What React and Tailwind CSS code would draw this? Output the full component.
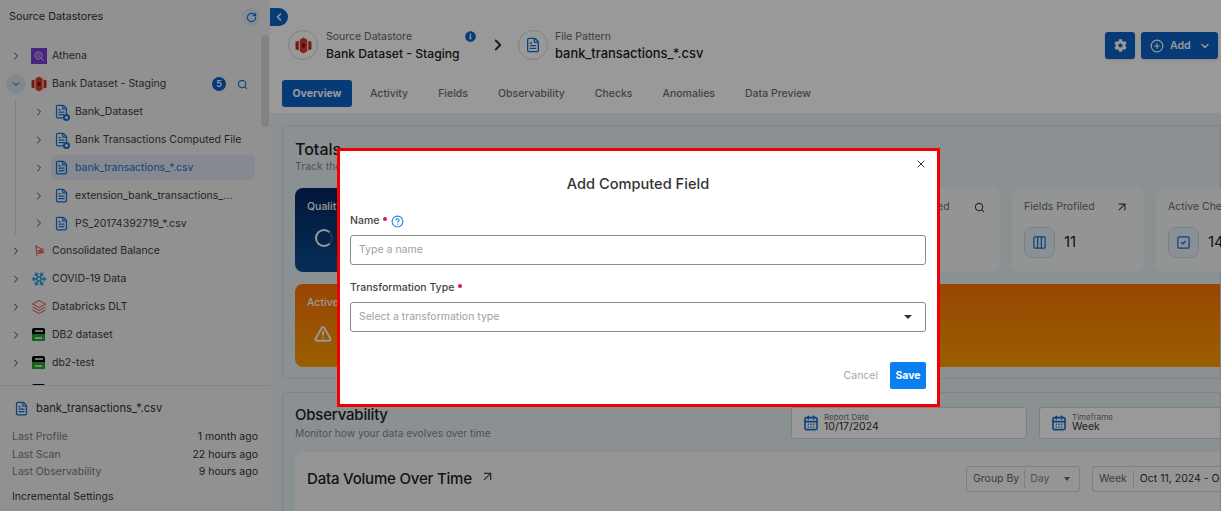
import React from 'react';
import { ChevronRight, ChevronDown, ChevronLeft, RotateCw, Search, FileText, X, CirclePlus, ArrowUpRight, CircleHelp, Columns3, SquareCheck, TriangleAlert, Snowflake, CalendarDays } from 'lucide-react';
import { FaCog, FaInfoCircle } from 'react-icons/fa';

const font = { fontFamily: 'Inter, "Liberation Sans", sans-serif' };

const RedCube = ({ size = 16 }) => (
  <svg width={size} height={size} viewBox="0 0 16 16">
    <path d="M0.5 4.5l3-1v9l-3-1z" fill="#c42a1e" />
    <path d="M15.5 4.5l-3-1v9l3-1z" fill="#c42a1e" />
    <path d="M4.5 2.5L8 0.5l3.5 2v11L8 15.500l-3.500-2z" fill="#de3a2e" />
    <rect x="6.500" y="6" width="3" height="4" fill="#7a1710" />
  </svg>
);

const Athena = () => (
  <svg width="16" height="16" viewBox="0 0 16 16">
    <rect width="16" height="16" fill="#7c3fd6" />
    <circle cx="7.500" cy="7.500" r="3.600" fill="none" stroke="#d9c8f5" strokeWidth="1" />
    <circle cx="7.500" cy="7.500" r="1.500" fill="none" stroke="#d9c8f5" strokeWidth="0.7" />
    <path d="M10 10l3.500 3.500" stroke="#d9c8f5" strokeWidth="1" />
  </svg>
);

const Consolidated = () => (
  <svg width="16" height="16" viewBox="0 0 16 16">
    <path d="M5 2l1 11M5.500 3.500l6.500 3-5 1.500 6 1-6 1.500" fill="none" stroke="#e0685e" strokeWidth="1.300" />
  </svg>
);

const Databricks = () => (
  <svg width="16" height="16" viewBox="0 0 16 16" fill="none" stroke="#e0523f" strokeWidth="1">
    <path d="M8 1.500l6.500 3.500L8 8.500 1.500 5z" />
    <path d="M1.500 8L8 11.500 14.500 8" />
    <path d="M1.500 11L8 14.500 14.500 11" />
  </svg>
);

const Db2 = () => (
  <div className="ml-[1px] flex h-[13px] w-[13px] flex-col overflow-hidden rounded-[2px] bg-black">
    <div className="mx-auto mt-[2px] h-[2px] w-[8px] bg-[#bfbfbf]" />
    <div className="mt-auto flex h-[7px] items-center justify-center bg-[#1fa82e]">
      <div className="h-[2px] w-[7px] bg-[#bfe8c2]" />
    </div>
  </div>
);

const GearFile = () => (
  <div className="relative h-[16px] w-[14px]">
    <FileText size={15} strokeWidth={2} className="text-[#1371d6]" />
    <div className="absolute -bottom-[1px] -right-[2px] h-[7px] w-[7px] rounded-full border-2 border-[#1371d6] bg-[#f4f4f4]" />
  </div>
);

const TreeRow = ({ icon, label, child, active, open, extra }) => (
  <div className={`flex h-[27.85px] shrink-0 items-center ${child ? 'pl-[29px]' : 'pl-[6px]'}`}>
    <div className={`flex h-[20px] w-[20px] shrink-0 items-center justify-center rounded-full ${open ? 'bg-[#d6e4f0]' : ''}`}>
      {open ? <ChevronDown size={12} className="text-[#444]" /> : <ChevronRight size={12} className="text-[#444]" />}
    </div>
    <div className={`flex h-[25px] min-w-0 flex-1 items-center rounded-[4px] ${active ? 'ml-[2px] mr-[15px] bg-[#dfe6f0] pl-[2px]' : 'ml-[4px]'}`}>
      <div className="flex w-[21px] shrink-0 justify-start pl-[1px]">{icon}</div>
      <span className={`ml-[1px] truncate text-[10.500px] ${active ? 'text-[#1d6fd0]' : 'text-[#3c3c3c]'}`}>{label}</span>
      {extra}
    </div>
  </div>
);

const Stat = ({ label, value, icon, right }) => (
  <div className="flex h-[84px] w-[132px] shrink-0 flex-col rounded-[8px] bg-[#f6f8f9] px-[12px] pt-[12px]">
    <div className="flex h-[14px] items-center justify-between text-[10.500px] text-[#6b6b6b]">
      <span className="whitespace-nowrap">{label}</span>
      {right}
    </div>
    <div className="mt-[13px] flex items-center gap-[9px]">
      {icon && <div className="flex h-[31px] w-[31px] items-center justify-center rounded-[8px] border border-[#cfd8e0] bg-[#e6f0fa] text-[#1a6fd0]">{icon}</div>}
      <span className="text-[15px] text-[#222]">{value}</span>
    </div>
  </div>
);

const tabs = ['Activity', 'Fields', 'Observability', 'Checks', 'Anomalies', 'Data Preview'];

const Req = () => <span className="mb-[5px] ml-[4px] h-[4px] w-[4px] rounded-full bg-[#e8114b]" />;

export default function App() {
  return (
    <div style={font} className="relative flex h-[511px] w-[1221px] overflow-hidden bg-white">
      {/* sidebar */}
      <aside className="relative flex w-[270px] shrink-0 flex-col bg-[#f2f2f2]">
        <div className="flex h-[34px] shrink-0 items-center justify-between pl-[9px] pr-[10px]">
          <span className="text-[10.800px] text-[#333]">Source Datastores</span>
          <div className="flex h-[18px] w-[18px] items-center justify-center rounded-full bg-[#dce8f3]">
            <RotateCw size={11} strokeWidth={2.400} className="text-[#1371d6]" />
          </div>
        </div>
        <div className="relative mt-[8.400px] flex min-h-0 flex-1 flex-col overflow-hidden">
          <TreeRow icon={<Athena />} label="Athena" />
          <TreeRow
            open
            icon={<RedCube />}
            label="Bank Dataset - Staging"
            extra={
              <div className="ml-auto mr-[22px] flex items-center gap-[11px]">
                <span className="flex h-[14px] w-[14px] items-center justify-center rounded-full bg-[#0b63c9] text-[9px] font-semibold text-white">5</span>
                <Search size={11} strokeWidth={2.400} className="text-[#1371d6]" />
              </div>
            }
          />
          <TreeRow child icon={<GearFile />} label="Bank_Dataset" />
          <TreeRow child icon={<GearFile />} label="Bank Transactions Computed File" />
          <TreeRow child active icon={<FileText size={15} className="text-[#1371d6]" />} label="bank_transactions_*.csv" />
          <TreeRow child icon={<FileText size={15} className="text-[#1371d6]" />} label="extension_bank_transactions_..." />
          <TreeRow child icon={<FileText size={15} className="text-[#1371d6]" />} label="PS_20174392719_*.csv" />
          <TreeRow icon={<Consolidated />} label="Consolidated Balance" />
          <TreeRow icon={<Snowflake size={16} strokeWidth={2.400} className="text-[#2aa3dc]" />} label="COVID-19 Data" />
          <TreeRow icon={<Databricks />} label="Databricks DLT" />
          <TreeRow icon={<Db2 />} label="DB2 dataset" />
          <TreeRow icon={<Db2 />} label="db2-test" />
          <TreeRow icon={<Db2 />} label="" />
          <div className="absolute left-[15px] top-[58px] h-[135px] w-px bg-[#d5d5d5]" />
        </div>
        <div className="flex h-[126px] shrink-0 flex-col border-t border-[#dedede] px-[12px] pt-[14px] text-[10.500px]">
          <div className="flex items-center gap-[7px] pl-[2px] text-[#333]">
            <FileText size={15} className="text-[#1371d6]" />
            <span className="text-[11.200px]">bank_transactions_*.csv</span>
          </div>
          <div className="mt-[11px] flex h-[18px] items-center justify-between"><span className="text-[#7b7b7b]">Last Profile</span><span className="text-[#333]">1 month ago</span></div>
          <div className="flex h-[18px] items-center justify-between"><span className="text-[#7b7b7b]">Last Scan</span><span className="text-[#333]">22 hours ago</span></div>
          <div className="flex h-[17px] items-center justify-between"><span className="text-[#7b7b7b]">Last Observability</span><span className="text-[#333]">9 hours ago</span></div>
          <div className="mt-[8px] text-[#333]">Incremental Settings</div>
        </div>
        <div className="absolute right-[1px] top-[35px] h-[92px] w-[8px] rounded-full bg-[#dadada]" />
      </aside>

      {/* main */}
      <main className="relative flex min-w-0 flex-1 flex-col">
        <div className="absolute left-0 top-[8px] flex h-[18px] w-[18px] items-center justify-center rounded-r-full bg-[#0b63c9]">
          <ChevronLeft size={12} strokeWidth={3} className="text-white" />
        </div>
        <header className="flex h-[113px] shrink-0 flex-col bg-white px-[12px]">
          <div className="flex h-[80px] items-start pt-[30px]">
            <div className="ml-[6px] flex h-[30px] w-[30px] items-center justify-center rounded-full border border-[#d8d8d8]"><RedCube size={17} /></div>
            <div className="ml-[8px] w-[130px] leading-none">
              <div className="mt-[2px] text-[10.500px] text-[#666]">Source Datastore</div>
              <div className="mt-[5px] whitespace-nowrap text-[12.200px] font-medium text-[#222]">Bank Dataset - Staging</div>
            </div>
            <FaInfoCircle size={11} className="ml-[9px] mt-[1px] text-[#0b63c9]" />
            <ChevronRight size={18} strokeWidth={2.600} className="ml-[13px] mt-[6px] text-[#333]" />
            <div className="ml-[11px] flex h-[30px] w-[30px] items-center justify-center rounded-full border border-[#d8d8d8]"><FileText size={16} className="text-[#1371d6]" /></div>
            <div className="ml-[7px] leading-none">
              <div className="mt-[2px] text-[10.500px] text-[#666]">File Pattern</div>
              <div className="mt-[5px] whitespace-nowrap text-[12.900px] font-medium text-[#222]">bank_transactions_*.csv</div>
            </div>
            <div className="ml-auto mr-[-9px] mt-[2px] flex gap-[6px]">
              <div className="flex h-[27px] w-[30px] items-center justify-center rounded-[3px] bg-[#0b63c9] shadow"><FaCog size={13} className="text-white" /></div>
              <div className="flex h-[27px] w-[77px] items-center gap-[6px] rounded-[3px] bg-[#0b63c9] pl-[9px] shadow">
                <CirclePlus size={14} className="text-white" />
                <span className="text-[10.500px] font-semibold text-white">Add</span>
                <ChevronDown size={12} strokeWidth={3} className="ml-[2px] text-white" />
              </div>
            </div>
          </div>
          <nav className="flex items-center text-[10.500px] font-medium text-[#6f6f6f]">
            <div className="flex h-[27px] w-[70px] items-center justify-center rounded-[3px] bg-[#0b63c9] font-bold text-white">Overview</div>
            <div className="ml-[18px] flex gap-[30px]">
              {tabs.map((t) => <span key={t}>{t}</span>)}
            </div>
          </nav>
        </header>

        <div className="flex flex-1 flex-col gap-[13px] bg-[#e8f0f5] pl-[12px] pt-[12px]">
          <section className="h-[254px] shrink-0 rounded-l-[6px] border border-[#d5dde3] pl-[12px] pt-[13px]">
            <div className="text-[16px] font-medium leading-[20px] text-[#222]">Totals</div>
            <div className="mt-[1px] text-[10.500px] leading-[14px] text-[#888]">Track the key metrics</div>
            <div className="mt-[14px] flex gap-[12px]">
              <div className="flex h-[84px] w-[129px] shrink-0 flex-col rounded-[8px] bg-gradient-to-b from-[#04275f] to-[#0b4c92] px-[12px] pt-[11px]">
                <span className="text-[10.500px] font-medium text-white">Quality</span>
                <div className="ml-[8px] mt-[14px] h-[18px] w-[18px] rounded-full border-2 border-white border-r-[#3a5a85]" />
              </div>
              <div className="h-[84px] w-[132px] shrink-0 rounded-[8px] bg-[#f6f8f9]" />
              <div className="h-[84px] w-[132px] shrink-0 rounded-[8px] bg-[#f6f8f9]" />
              <div className="h-[84px] w-[132px] shrink-0 rounded-[8px] bg-[#f6f8f9]" />
              <Stat label="Files Scanned" value="" icon={null} right={<Search size={11} strokeWidth={2.400} className="mr-[3px] text-[#444]" />} />
              <Stat label="Fields Profiled" value="11" icon={<Columns3 size={15} />} right={<ArrowUpRight size={14} className="mr-[3px] text-[#444]" />} />
              <Stat label="Active Checks" value="14" icon={<SquareCheck size={15} />} />
            </div>
            <div className="mt-[12px] flex h-[83px] flex-col rounded-l-[8px] bg-gradient-to-b from-[#ff7306] to-[#ff9f00] px-[12px] pt-[11px]">
              <span className="text-[10.500px] font-medium text-white">Active Anomalies</span>
              <TriangleAlert size={18} strokeWidth={2.500} className="ml-[7px] mt-[14px] text-white" />
            </div>
          </section>

          <section className="flex-1 rounded-l-[6px] border border-[#d5dde3] pl-[12px] pt-[12px]">
            <div className="flex items-start">
              <div>
                <div className="text-[15px] font-medium leading-[20px] tracking-[-0.2px] text-[#222]">Observability</div>
                <div className="mt-[1px] text-[10.200px] leading-[14px] text-[#888]">Monitor how your data evolves over time</div>
              </div>
              <div className="ml-auto mt-[2px] flex gap-[12px]">
                <div className="flex h-[32px] w-[236px] items-center gap-[5px] rounded-[3px] border border-[#d5d5d5] bg-white pl-[11px]">
                  <CalendarDays size={16} strokeWidth={2.400} className="text-[#1371d6]" />
                  <div className="leading-none">
                    <div className="text-[8px] text-[#777]">Report Date</div>
                    <div className="mt-[1px] text-[10.500px] text-[#333]">10/17/2024</div>
                  </div>
                </div>
                <div className="flex h-[32px] w-[181px] items-center gap-[5px] rounded-l-[3px] border border-r-0 border-[#d5d5d5] bg-white pl-[11px]">
                  <CalendarDays size={16} strokeWidth={2.400} className="text-[#1371d6]" />
                  <div className="leading-none">
                    <div className="text-[8px] text-[#777]">Timeframe</div>
                    <div className="mt-[1px] text-[10.500px] text-[#333]">Week</div>
                  </div>
                </div>
              </div>
            </div>
            <div className="mt-[12px] h-[80px] rounded-l-[8px] bg-[#f8f8f8] pl-[12px] pt-[14px]">
              <div className="flex items-center">
                <span className="text-[15px] font-medium tracking-[-0.2px] text-[#222]">Data Volume Over Time</span>
                <ArrowUpRight size={15} className="mb-[5px] ml-[8px] text-[#444]" />
                <div className="ml-auto flex gap-[12px] text-[10.500px] text-[#666]">
                  <div className="flex h-[26px] w-[114px] items-center rounded-[3px] border border-[#d5d5d5] px-[6px]">
                    <span>Group By</span>
                    <span className="mx-[5px] h-[18px] w-px bg-[#d5d5d5]" />
                    <span className="text-[#888]">Day</span>
                    <span className="ml-auto mr-[3px] h-0 w-0 border-x-[3px] border-t-[4px] border-x-transparent border-t-[#666]" />
                  </div>
                  <div className="flex h-[26px] w-[128px] items-center overflow-hidden whitespace-nowrap rounded-l-[3px] border border-r-0 border-[#d5d5d5] pl-[6px]">
                    <span>Week</span>
                    <span className="mx-[6px] h-[18px] w-px shrink-0 bg-[#d5d5d5]" />
                    <span className="text-[#333]">Oct 11, 2024 - Oc</span>
                  </div>
                </div>
              </div>
            </div>
          </section>
        </div>
      </main>

      {/* dimmer */}
      <div className="absolute inset-0 bg-black/40" />

      {/* dialog */}
      <div className="absolute left-[337px] top-[148px] h-[259px] w-[603px] border-[3px] border-[#f00000] bg-white pl-[10px] pr-[11px] pt-[17px]">
        <X size={12} strokeWidth={2} className="absolute right-[10px] top-[7px] text-[#333]" />
        <h2 className="pt-[6px] text-center text-[14.600px] font-medium leading-[20px] text-[#333]">Add Computed Field</h2>
        <div className="mt-[19px] flex h-[16px] items-center text-[10.500px] font-medium text-[#444]">
          Name
          <Req />
          <CircleHelp size={13} className="ml-[4px] text-[#1c84ee]" />
        </div>
        <div className="mt-[6px] flex h-[30px] items-center rounded-[3px] border border-[#8a8a8a] px-[8px] text-[10.500px] text-[#a0a0a0]">Type a name</div>
        <div className="mt-[15px] flex h-[16px] items-center text-[10.500px] font-medium text-[#444]">
          Transformation Type
          <Req />
        </div>
        <div className="mt-[6px] flex h-[30px] items-center justify-between rounded-[3px] border border-[#8a8a8a] px-[8px] text-[10.500px] text-[#a0a0a0]">
          Select a transformation type
          <span className="mr-[5px] h-0 w-0 border-x-[4px] border-t-[4px] border-x-transparent border-t-[#333]" />
        </div>
        <div className="mt-[30px] flex items-center justify-end gap-[12px]">
          <span className="text-[10.500px] text-[#a5a5a5]">Cancel</span>
          <button className="flex h-[27px] w-[36px] items-center justify-center rounded-[2px] bg-[#0a7ff0] text-[10.500px] font-bold text-white">Save</button>
        </div>
      </div>
    </div>
  );
}
